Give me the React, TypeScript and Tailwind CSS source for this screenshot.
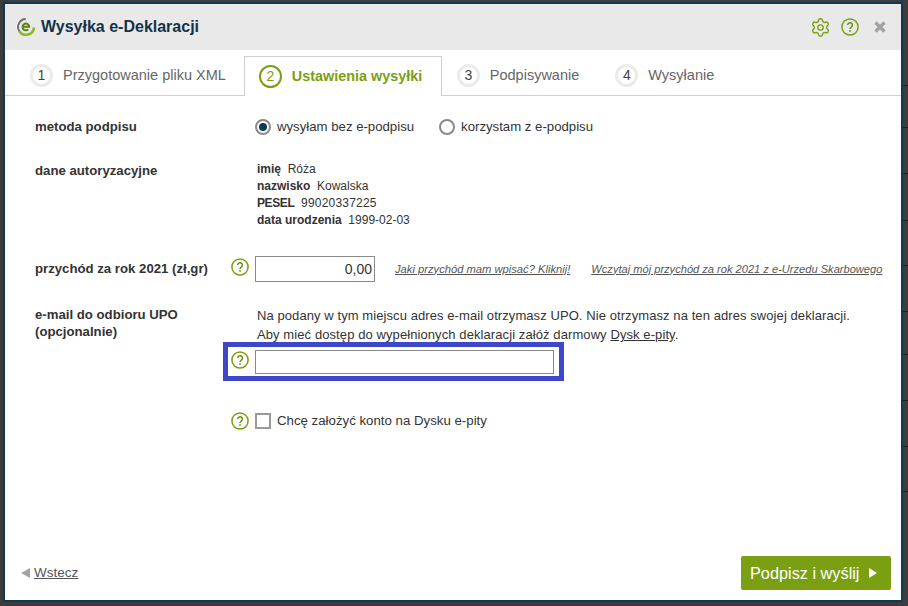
import { Settings } from "lucide-react";

const font = { fontFamily: '"Liberation Sans", Arial, sans-serif' };

const marginRows = [84, 42, 46, 47, 45, 46, 43, 46, 46, 45];

function Help({ size = 18 }: { size?: number }) {
  return (
    <svg width={size} height={size} viewBox="0 0 18 18" fill="none" className="shrink-0">
      <circle cx="9" cy="9" r="8.1" stroke="#7a9f12" strokeWidth="1.5" />
      <path d="M6.6 7.1a2.4 2.4 0 1 1 3.7 2c-.9.6-1.3 1-1.3 2" stroke="#6f8f14" strokeWidth="1.5" />
      <rect x="8.2" y="12.2" width="1.6" height="1.6" fill="#6f8f14" />
    </svg>
  );
}

function Step({ n, label, active }: { n: number; label: string; active?: boolean }) {
  return (
    <div
      className={
        active
          ? "flex h-[40px] w-[198px] items-center -mb-px border border-b-0 border-[#cfcfcf] bg-white pl-[14px]"
          : "flex h-[39px] items-center"
      }
    >
      <span
        className={
          active
            ? "flex h-[23px] w-[23px] items-center justify-center rounded-full border-2 border-[#7a9f12] text-[14px] text-[#7a9f12]"
            : "flex h-[23px] w-[23px] items-center justify-center rounded-full border-[3px] border-[#ebebeb] text-[14px] text-[#444]"
        }
      >
        {n}
      </span>
      <span className={active ? "ml-[10px] text-[14.4px] font-bold text-[#7a9f12]" : "ml-[10px] text-[14.5px] text-[#666]"}>
        {label}
      </span>
    </div>
  );
}

export default function App() {
  return (
    <div className="flex h-[606px] w-[908px] overflow-hidden bg-[#3c3c3c] pl-[3px] pt-[2px]" style={font}>
      <div className="flex h-[600px] w-[900px] shrink-0 flex-col border-2 border-[#0f3a52] bg-white text-[#333]">
        <div className="flex h-[46px] shrink-0 items-center bg-[#e9e9e9] pl-[12px] pr-[14px]">
          <svg width="18" height="18" viewBox="0 0 18 18" fill="none">
            <path d="M8.8 1A8 8 0 0 0 2.4 13.4" stroke="#6f6f6f" strokeWidth="1.9" />
            <path d="M2.2 13A8 8 0 0 0 17 9.4" stroke="#8cbb1f" strokeWidth="2.6" />
            <path d="M5.6 8.8h6.7a3.4 3.4 0 1 0-1 2.6" stroke="#5f7f10" strokeWidth="1.9" />
          </svg>
          <h1 className="ml-[6px] text-[16px] font-bold text-[#12334a]">Wysyłka e-Deklaracji</h1>
          <div className="ml-auto flex items-center gap-[10px]">
            <Settings size={21} color="#7a9f12" strokeWidth={1.6} />
            <Help />
            <svg width="14" height="14" viewBox="0 0 14 14" className="ml-[4px]">
              <path d="M2.5 2.5l9 9M11.5 2.5l-9 9" stroke="#a3a3a3" strokeWidth="3.4" />
            </svg>
          </div>
        </div>

        <div className="flex h-[46px] shrink-0 items-end border-b border-[#cfcfcf] pl-[25px]">
          <div className="mr-[18px]">
            <Step n={1} label="Przygotowanie pliku XML" />
          </div>
          <Step n={2} label="Ustawienia wysyłki" active />
          <div className="ml-[15px]">
            <Step n={3} label="Podpisywanie" />
          </div>
          <div className="ml-[36px]">
            <Step n={4} label="Wysyłanie" />
          </div>
        </div>

        <div className="flex min-h-0 flex-1 flex-col pl-[30px] pr-[10px]">
          <div className="flex pt-[22px]">
            <div className="w-[190px] text-[13.2px] font-bold leading-[18px]">metoda podpisu</div>
            <div className="ml-[30px] flex items-center text-[13.2px] leading-[16px]">
              <span className="flex h-[16px] w-[16px] items-center justify-center rounded-full border-2 border-[#8a8a8a]">
                <span className="h-[8px] w-[8px] rounded-full bg-[#0f3a52]" />
              </span>
              <span className="ml-[6px]">wysyłam bez e-podpisu</span>
              <span className="ml-[25px] h-[16px] w-[16px] rounded-full border-2 border-[#8a8a8a]" />
              <span className="ml-[6px]">korzystam z e-podpisu</span>
            </div>
          </div>

          <div className="mt-[25px] flex">
            <div className="w-[190px] pt-px text-[13.2px] font-bold leading-[17px]">dane autoryzacyjne</div>
            <div className="ml-[32px] text-[12px] leading-[17px]">
              <div><b>imię</b>&nbsp; Róża</div>
              <div><b>nazwisko</b>&nbsp; Kowalska</div>
              <div><b className="tracking-[-0.4px]">PESEL</b>&nbsp; <span className="tracking-[0.2px]">99020337225</span></div>
              <div><b>data urodzenia</b>&nbsp; 1999-02-03</div>
            </div>
          </div>

          <div className="mt-[27px] flex items-center">
            <div className="w-[190px] text-[13.2px] font-bold">przychód za rok 2021 (zł,gr)</div>
            <div className="mb-[4px] ml-[6px]"><Help /></div>
            <div className="ml-[6px] flex h-[26px] w-[120px] items-center justify-end border border-[#8a8a8a] pr-[2px] text-[14px]">0,00</div>
            <a className="ml-[20px] text-[11.2px] italic text-[#555] underline">Jaki przychód mam wpisać? Kliknij!</a>
            <a className="ml-[21px] text-[11.1px] italic text-[#555] underline">Wczytaj mój przychód za rok 2021 z e-Urzedu Skarbowego</a>
          </div>

          <div className="mt-[22px] flex">
            <div className="w-[190px] pt-[2px] text-[13.2px] font-bold leading-[17px]">
              e-mail do odbioru UPO<br />(opcjonalnie)
            </div>
            <div className="flex flex-col">
              <p className="ml-[32px] mt-[2px] text-[13px] leading-[19px]">
                <span className="tracking-[0.08px]">Na podany w tym miejscu adres e-mail otrzymasz UPO. Nie otrzymasz na ten adres swojej deklaracji.</span><br />
                <span className="tracking-[0.09px]">Aby mieć dostęp do wypełnionych deklaracji załóż darmowy <a className="underline">Dysk e-pity</a>.</span>
              </p>
              <div className="-ml-[2px] -mt-[2px] flex h-[39px] w-[341px] items-center border-[5px] border-[#3d47c9] pl-[3px]">
                <div className="mb-[4px]"><Help /></div>
                <div className="ml-[6px] h-[24px] w-[299px] border border-[#8a8a8a]" />
              </div>
              <div className="ml-[6px] mt-[30px] flex items-center">
                <Help />
                <span className="ml-[6px] h-[16px] w-[16px] border-2 border-[#9a9a9a]" />
                <span className="ml-[6px] text-[13.25px]">Chcę założyć konto na Dysku e-pity</span>
              </div>
            </div>
          </div>

          <div className="-ml-[14px] mb-[10px] mt-auto flex items-center justify-between">
            <div className="flex items-center">
              <span className="h-0 w-0 border-y-[5px] border-r-[9px] border-y-transparent border-r-[#a3a3a3]" />
              <a className="ml-[4px] text-[13.5px] text-[#555] underline">Wstecz</a>
            </div>
            <button className="flex h-[34px] w-[150px] items-center gap-[10px] rounded-[2px] bg-[#7a9f12] pl-[9px] text-[16.3px] text-white">
              Podpisz i wyślij
              <span className="h-0 w-0 border-y-[5px] border-l-[8px] border-y-transparent border-l-white" />
            </button>
          </div>
        </div>
      </div>
      <div className="flex w-[5px] shrink-0 flex-col">
        {marginRows.map((h, i) => (
          <div key={i} className="shrink-0 border-b border-[#1f1f1f]" style={{ height: h }} />
        ))}
      </div>
    </div>
  );
}
